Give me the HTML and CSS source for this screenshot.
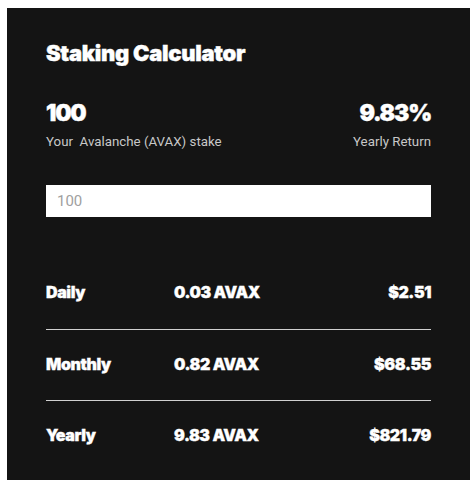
FILE: index.html
```html
<!DOCTYPE html>
<html lang="en">
<head>
<meta charset="utf-8">
<title>Staking Calculator</title>
<link rel="stylesheet" href="styles.css">
</head>
<body>
<div class="card">
  <h1 class="title">Staking Calculator</h1>
  <div class="summary">
    <div class="stat">
      <div class="stat-value">100</div>
      <div class="stat-label">Your&nbsp; Avalanche (AVAX) stake</div>
    </div>
    <div class="stat stat-right">
      <div class="stat-value">9.83%</div>
      <div class="stat-label">Yearly Return</div>
    </div>
  </div>
  <input class="amount" type="text" placeholder="100">
  <div class="results">
    <div class="row">
      <span class="period">Daily</span>
      <span class="avax">0.03 AVAX</span>
      <span class="usd">$2.51</span>
    </div>
    <div class="row">
      <span class="period">Monthly</span>
      <span class="avax">0.82 AVAX</span>
      <span class="usd">$68.55</span>
    </div>
    <div class="row">
      <span class="period">Yearly</span>
      <span class="avax">9.83 AVAX</span>
      <span class="usd">$821.79</span>
    </div>
  </div>
</div>
</body>
</html>
```
FILE: styles.css
```css
html, body {
  margin: 0;
  padding: 0;
  background: #ffffff;
}
body {
  padding: 8px 4px 7px 7px;
  font-family: Inter, "Liberation Sans", sans-serif;
}
.card {
  background: #141414;
  color: #ffffff;
  width: 463px;
  height: 472px;
  box-sizing: border-box;
  padding: 31px 39px 0 39px;
  display: flex;
  flex-direction: column;
}
.title {
  margin: 0;
  font-size: 22px;
  font-weight: 900;
  line-height: 28px;
  letter-spacing: -0.3px;
  -webkit-text-stroke: 0.4px #ffffff;
}
.summary {
  margin-top: 33px;
  display: flex;
  justify-content: space-between;
}
.stat {
  display: flex;
  flex-direction: column;
}
.stat-right {
  align-items: flex-end;
}
.stat-value {
  font-size: 23px;
  font-weight: 900;
  line-height: 26px;
  letter-spacing: -1.2px;
  -webkit-text-stroke: 0.4px #ffffff;
}
.stat-label {
  margin-top: 8px;
  font-family: Roboto, "Liberation Sans", sans-serif;
  font-size: 13.3px;
  line-height: 16px;
  color: #c8c8c8;
}
.amount {
  margin-top: 35px;
  height: 32px;
  box-sizing: border-box;
  border: none;
  background: #ffffff;
  padding: 0 11px;
  font-family: Roboto, "Liberation Sans", sans-serif;
  font-size: 15px;
  color: #333;
  outline: none;
}
.amount::placeholder {
  color: #a0a0a0;
}
.results {
  margin-top: 41px;
  display: flex;
  flex-direction: column;
}
.row {
  display: flex;
  align-items: center;
  box-sizing: border-box;
  height: 71px;
  padding-bottom: 3px;
  font-size: 16px;
  font-weight: 900;
  letter-spacing: -0.4px;
  -webkit-text-stroke: 0.35px #ffffff;
}
.row + .row {
  border-top: 1px solid #d0d0d0;
}
.period {
  width: 128px;
}
.avax {
  flex: 1;
}
.usd {
  text-align: right;
}
```
